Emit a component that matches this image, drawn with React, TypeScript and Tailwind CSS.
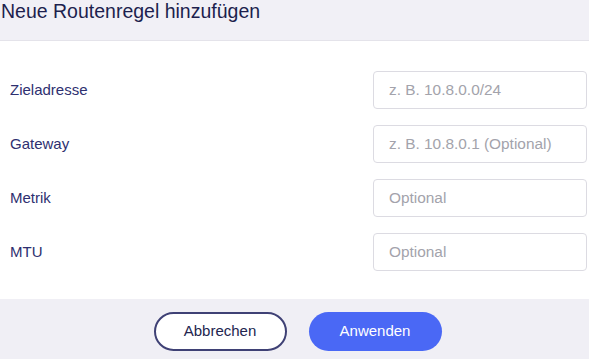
const fields = [
  { label: "Zieladresse", placeholder: "z. B. 10.8.0.0/24" },
  { label: "Gateway", placeholder: "z. B. 10.8.0.1 (Optional)" },
  { label: "Metrik", placeholder: "Optional" },
  { label: "MTU", placeholder: "Optional" },
];

export default function App() {
  return (
    <div className="flex h-[359px] w-[589px] flex-col overflow-hidden bg-white font-['Liberation_Sans'] text-[15px]">
      <header className="h-[41px] shrink-0 border-b border-[#e4e3ea] bg-[#f1f0f6]">
        <h2 className="-mt-[2px] pl-[1px] font-['Liberation_Sans'] text-[19.5px] leading-[26px] text-[#1d1f4e]">
          Neue Routenregel hinzufügen
        </h2>
      </header>

      <div className="flex flex-1 flex-col gap-4 px-[10px] pt-[30px]">
        {fields.map((f) => (
          <div key={f.label} className="flex items-center justify-between">
            <label className="font-['Liberation_Sans'] text-[15px] text-[#2e3070]">{f.label}</label>
            <input
              placeholder={f.placeholder}
              className="mr-[-8px] h-[38px] w-[214px] rounded-[4px] border border-[#dcdbe2] bg-white px-[15px] font-['Liberation_Sans'] text-[15.4px] text-[#333] outline-none placeholder:text-[#a3a3ab]"
            />
          </div>
        ))}
      </div>

      <footer className="flex h-[60px] shrink-0 items-center justify-center gap-[22px] bg-[#f0eff5] pl-[6px] pt-[4px]">
        <button className="h-[39px] w-[133px] rounded-full border-2 border-[#3f4175] bg-white font-['Liberation_Sans'] text-[15px] text-[#23254f]">
          Abbrechen
        </button>
        <button className="h-[39px] w-[133px] rounded-full bg-[#4a68f5] font-['Liberation_Sans'] text-[15px] text-white">
          Anwenden
        </button>
      </footer>
    </div>
  );
}
